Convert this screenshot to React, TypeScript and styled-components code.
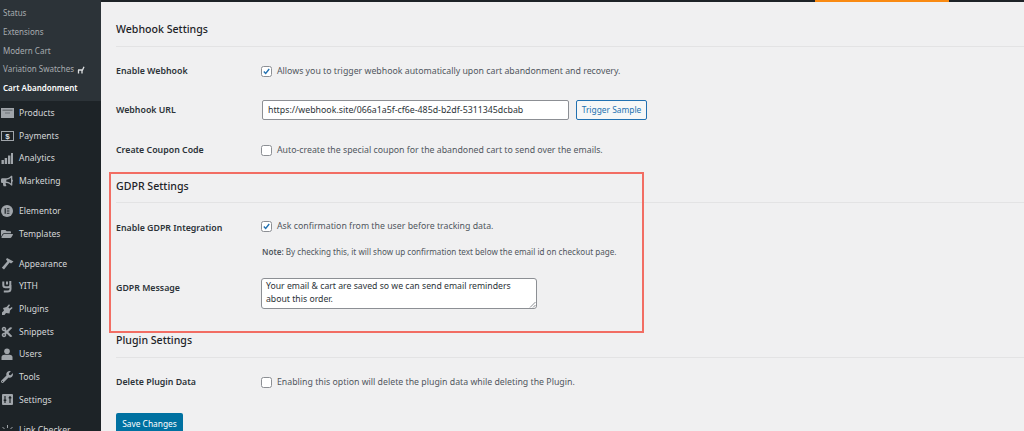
import styled, { createGlobalStyle } from 'styled-components';
import { FaBullhorn, FaCut, FaFolderOpen, FaWrench } from 'react-icons/fa';
import type { ReactNode } from 'react';

const GlobalStyle = createGlobalStyle`
  html, body {
    margin: 0;
    padding: 0;
    height: 431px;
    overflow: hidden;
    background: #f0f0f1;
    font-family: "Noto Sans", "Open Sans", sans-serif;
  }
`;

const Page = styled.div`
  width: 1024px;
  height: 431px;
  display: flex;
  overflow: hidden;
`;

const Sidebar = styled.nav`
  width: 101px;
  flex-shrink: 0;
  background: #1d2327;
  overflow: hidden;
  height: 431px;
`;

const SubMenu = styled.ul`
  list-style: none;
  margin: 0;
  padding: 4px 0 3px 3px;
  height: 94px;
  background: #2c3338;
`;

const SubItem = styled.li<{ $current?: boolean }>`
  height: 18.8px;
  line-height: 18.8px;
  font-size: 8px;
  white-space: nowrap;
  color: ${(p) => (p.$current ? '#ffffff' : '#a7abaf')};
  font-weight: ${(p) => (p.$current ? 600 : 400)};
  display: flex;
  align-items: center;
  gap: 3px;
`;

const MenuList = styled.ul`
  list-style: none;
  margin: 0;
  padding: 0.5px 0 0;
`;

const MenuItem = styled.li<{ $gap?: boolean }>`
  height: 22.7px;
  margin-top: ${(p) => (p.$gap ? '7.3px' : '0')};
  display: flex;
  align-items: center;
  color: #d5d7d9;
  font-size: 8.6px;
  white-space: nowrap;
`;

const IconSlot = styled.span`
  width: 14px;
  margin-right: 5px;
  flex-shrink: 0;
  display: flex;
  justify-content: center;
  color: #a0a5aa;
  font-size: 12px;
`;

const Main = styled.main`
  flex: 1;
  min-width: 0;
  position: relative;
  padding-top: 2px;
`;

const TopStrip = styled.div`
  height: 2px;
  position: absolute;
  top: 0;
  left: 0;
  right: 0;
  background: #1d2327;
`;

const TopAccent = styled.div`
  position: absolute;
  top: 0;
  left: 714px;
  width: 134px;
  height: 2px;
  background: #f98a12;
`;

const Content = styled.div`
  padding-left: 15px;
`;

const SectionTitle = styled.h2<{ $top: number; $after?: number }>`
  margin: 0 0 ${(p) => p.$after ?? 6}px;
  padding: ${(p) => p.$top}px 0 6.5px;
  font-size: 10.6px;
  line-height: 20px;
  font-weight: 500;
  color: #1d2327;
  border-bottom: 1px solid #e3e3e4;
`;

const FieldRow = styled.div<{ $height: number }>`
  height: ${(p) => p.$height}px;
  display: flex;
  align-items: center;
`;

const TopFieldRow = styled(FieldRow)<{ $pad: number }>`
  align-items: flex-start;
  padding-top: ${(p) => p.$pad}px;
`;

const FieldLabel = styled.div<{ $offset?: number }>`
  width: 145px;
  margin-top: ${(p) => p.$offset ?? 0}px;
  flex-shrink: 0;
  font-size: 8.8px;
  line-height: 13px;
  font-weight: 600;
  color: #2c3338;
`;

const Desc = styled.span`
  font-size: 8.78px;
  color: #50575e;
  margin-left: 5px;
  white-space: nowrap;
`;

const CheckBox = styled.span`
  width: 11px;
  height: 11px;
  box-sizing: border-box;
  background: #fff;
  border: 1px solid #8c8f94;
  border-radius: 2.5px;
  display: inline-flex;
  align-items: center;
  justify-content: center;
  flex-shrink: 0;
`;

const UrlInput = styled.div`
  width: 307px;
  margin-left: 1px;
  height: 20px;
  box-sizing: border-box;
  background: #fff;
  border: 1px solid #8c8f94;
  border-radius: 2px;
  padding-left: 5px;
  font-size: 8.8px;
  line-height: 18px;
  color: #2c3338;
  white-space: nowrap;
`;

const SecondaryButton = styled.div`
  margin-left: 7px;
  width: 71px;
  height: 20px;
  box-sizing: border-box;
  border: 1px solid #2271b1;
  border-radius: 2px;
  background: #f6f7f7;
  color: #2271b1;
  text-align: center;
  font-size: 8.4px;
  line-height: 18px;
  white-space: nowrap;
`;

const Stack = styled.div`
  display: flex;
  flex-direction: column;
`;

const CheckLine = styled.div`
  display: flex;
  align-items: center;
  height: 12px;
`;

const Note = styled.div`
  margin-top: 14px;
  margin-left: 1px;
  font-size: 8.1px;
  line-height: 12px;
  color: #50575e;
  white-space: nowrap;
  b {
    font-weight: 600;
  }
`;

const TextArea = styled.div`
  position: relative;
  width: 276px;
  height: 31px;
  box-sizing: border-box;
  background: #fff;
  border: 1px solid #8c8f94;
  border-radius: 3px;
  padding: 1px 4px;
  font-size: 8.7px;
  line-height: 13.4px;
  color: #2c3338;
`;

const ResizeGrip = styled.svg`
  position: absolute;
  right: 0;
  bottom: 0;
`;

const SaveButton = styled.div`
  width: 67px;
  height: 21px;
  margin-top: 12px;
  border-radius: 2px;
  background: #0071a1;
  color: #fff;
  font-size: 8.4px;
  line-height: 21px;
  text-align: center;
`;

const Highlight = styled.div`
  position: absolute;
  left: 8px;
  top: 172px;
  width: 535px;
  height: 161px;
  box-sizing: border-box;
  border: 2px solid #f26d63;
  pointer-events: none;
`;

const Check = ({ on }: { on?: boolean }) => (
  <CheckBox>
    {on && (
      <svg width="11" height="11" viewBox="0 0 11 11">
        <path d="M2.2 5.4 4.5 7.8 8.8 2.4" fill="none" stroke="#2271b1" strokeWidth="1.7" />
      </svg>
    )}
  </CheckBox>
);

const ProductsIcon = () => (
  <svg width="13" height="10" viewBox="0 0 13 10">
    <rect width="13" height="10" fill="currentColor" />
    <rect x="1.5" y="1.5" width="10" height="1.5" fill="#6f7478" />
    <rect x="4" y="4.5" width="5" height="1" fill="#6f7478" />
  </svg>
);

const PaymentsIcon = () => (
  <svg width="13" height="10" viewBox="0 0 13 10">
    <rect x="0.5" y="0.5" width="12" height="9" fill="none" stroke="currentColor" />
    <text x="6.5" y="8" fontSize="8" fontWeight="700" textAnchor="middle" fill="#dcdfe1" fontFamily="Liberation Sans">$</text>
  </svg>
);

const AnalyticsIcon = () => (
  <svg width="12" height="12" viewBox="0 0 12 12" fill="currentColor">
    <rect x="0.5" y="8" width="2.4" height="4" />
    <rect x="3.7" y="6" width="2.4" height="6" />
    <rect x="7" y="3.5" width="2.4" height="8.5" />
    <rect x="10" y="1" width="2" height="11" />
  </svg>
);

const ElementorIcon = () => (
  <svg width="12" height="12" viewBox="0 0 12 12">
    <circle cx="6" cy="6" r="6" fill="currentColor" />
    <path d="M3.6 3.2h1.2v5.6H3.6zM5.8 3.2h2.6v1.1H5.8zM5.8 5.5h2.6v1.1H5.8zM5.8 7.7h2.6v1.1H5.8z" fill="#1d2327" />
  </svg>
);

const HammerIcon = () => (
  <svg width="13" height="13" viewBox="0 0 13 13" fill="currentColor">
    <path d="M6 1 12.5 4.5 10 6.5 8.6 5.6 3 12.5 .8 10.8 6.4 4.2 5 2.6z" />
  </svg>
);

const YithIcon = () => (
  <svg width="11" height="13" viewBox="0 0 11 13">
    <path
      d="M1.3 1.5v3.6q0 2.2 2.2 2.2h2.6q2.2 0 2.2-2.2V1M8.5 5v4q0 2.5-3 2.5H1.8M5 1.5v3"
      fill="none"
      stroke="currentColor"
      strokeWidth="2"
    />
  </svg>
);

const PluginIcon = () => (
  <svg width="12" height="12" viewBox="0 0 12 12" fill="currentColor">
    <path d="M1 12V9.5L3 7.5 2 5 5.5 4 8 1.2 9 2.2 7.3 4.4 8.5 5.6 10.8 4 11.6 5 9 7.5 8.5 10.5 5 10 3.5 12z" />
  </svg>
);

const UserIcon = () => (
  <svg width="12" height="12" viewBox="0 0 12 12" fill="currentColor">
    <circle cx="6" cy="3.2" r="2.8" />
    <path d="M0.5 12V9.5Q0.5 7 3.5 6.8H8.5Q11.5 7 11.5 9.5V12z" />
  </svg>
);

const SettingsIcon = () => (
  <svg width="11" height="11" viewBox="0 0 11 11">
    <rect width="11" height="11" rx="1" fill="currentColor" />
    <path d="M3 2v7M8 2v7" stroke="#1d2327" strokeWidth="1.2" />
    <path d="M1.7 6.2h2.6M6.7 3.8h2.6" stroke="#1d2327" strokeWidth="1.6" />
  </svg>
);

const LinkIcon = () => (
  <svg width="13" height="12" viewBox="0 0 13 12">
    <path d="M3 11a3.5 3.5 0 0 1 7 0M6.5 1v3M1.5 3l2 2M11.5 3l-2 2" fill="none" stroke="currentColor" />
  </svg>
);

const subItems = ['Status', 'Extensions', 'Modern Cart'];

const menu: { label: string; icon: ReactNode; gap?: boolean }[] = [
  { label: 'Products', icon: <ProductsIcon /> },
  { label: 'Payments', icon: <PaymentsIcon /> },
  { label: 'Analytics', icon: <AnalyticsIcon /> },
  { label: 'Marketing', icon: <FaBullhorn /> },
  { label: 'Elementor', icon: <ElementorIcon />, gap: true },
  { label: 'Templates', icon: <FaFolderOpen /> },
  { label: 'Appearance', icon: <HammerIcon />, gap: true },
  { label: 'YITH', icon: <YithIcon /> },
  { label: 'Plugins', icon: <PluginIcon /> },
  { label: 'Snippets', icon: <FaCut /> },
  { label: 'Users', icon: <UserIcon /> },
  { label: 'Tools', icon: <FaWrench /> },
  { label: 'Settings', icon: <SettingsIcon /> },
  { label: 'Link Checker', icon: <LinkIcon />, gap: true },
];

const App = () => {
  return (
    <Page>
      <GlobalStyle />
      <Sidebar>
        <SubMenu>
          {subItems.map((s) => (
            <SubItem key={s}>{s}</SubItem>
          ))}
          <SubItem>
            Variation Swatches
            <svg width="8" height="8" viewBox="0 0 8 8">
              <path d="M1 4h4.5L7 .8M1.5 4v3.5M5 4v3.5" stroke="#dcdfe1" strokeWidth="1.3" fill="none" />
            </svg>
          </SubItem>
          <SubItem $current>Cart Abandonment</SubItem>
        </SubMenu>
        <MenuList>
          {menu.map((m) => (
            <MenuItem key={m.label} $gap={m.gap}>
              <IconSlot>{m.icon}</IconSlot>
              {m.label}
            </MenuItem>
          ))}
        </MenuList>
      </Sidebar>
      <Main>
        <TopStrip />
        <TopAccent />
        <Content>
          <SectionTitle $top={17} $after={5}>Webhook Settings</SectionTitle>
          <FieldRow $height={39}>
            <FieldLabel>Enable Webhook</FieldLabel>
            <Check on />
            <Desc>Allows you to trigger webhook automatically upon cart abandonment and recovery.</Desc>
          </FieldRow>
          <FieldRow $height={39}>
            <FieldLabel>Webhook URL</FieldLabel>
            <UrlInput>https://webhook.site/066a1a5f-cf6e-485d-b2df-5311345dcbab</UrlInput>
            <SecondaryButton>Trigger Sample</SecondaryButton>
          </FieldRow>
          <FieldRow $height={41}>
            <FieldLabel>Create Coupon Code</FieldLabel>
            <Check />
            <Desc>Auto-create the special coupon for the abandoned cart to send over the emails.</Desc>
          </FieldRow>
          <SectionTitle $top={5}>GDPR Settings</SectionTitle>
          <TopFieldRow $height={54} $pad={11}>
            <FieldLabel $offset={2}>Enable GDPR Integration</FieldLabel>
            <Stack>
              <CheckLine>
                <Check on />
                <Desc>Ask confirmation from the user before tracking data.</Desc>
              </CheckLine>
              <Note>
                <b>Note:</b> By checking this, it will show up confirmation text below the email id on checkout page.
              </Note>
            </Stack>
          </TopFieldRow>
          <TopFieldRow $height={48} $pad={4}>
            <FieldLabel $offset={4}>GDPR Message</FieldLabel>
            <TextArea>
              Your email &amp; cart are saved so we can send email reminders about this order.
              <ResizeGrip width="7" height="7" viewBox="0 0 7 7">
                <path d="M1 6.5 6.5 1M4 6.5 6.5 4" stroke="#8c8f94" />
              </ResizeGrip>
            </TextArea>
          </TopFieldRow>
          <SectionTitle $top={4}>Plugin Settings</SectionTitle>
          <FieldRow $height={37}>
            <FieldLabel>Delete Plugin Data</FieldLabel>
            <Check />
            <Desc>Enabling this option will delete the plugin data while deleting the Plugin.</Desc>
          </FieldRow>
          <SaveButton>Save Changes</SaveButton>
        </Content>
        <Highlight />
      </Main>
    </Page>
  );
};

export default App;
